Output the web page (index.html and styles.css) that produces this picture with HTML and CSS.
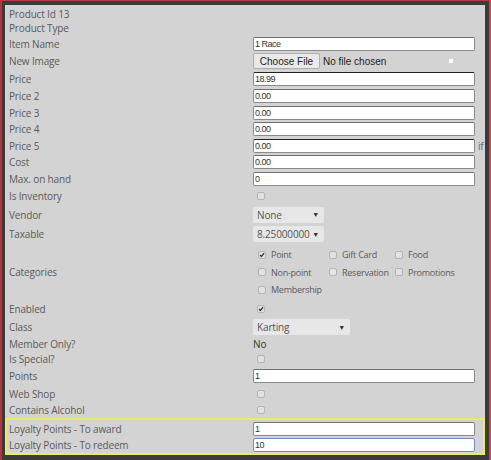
FILE: index.html
```html
<!DOCTYPE html>
<html>
<head>
<meta charset="utf-8">
<link rel="stylesheet" href="styles.css">
</head>
<body>
<div class="page">
  <div class="frame">
    <div class="form">
      <div class="row h14"><div class="lbl">Product Id 13</div></div>
      <div class="row h14"><div class="lbl">Product Type</div></div>
      <div class="row h17"><div class="lbl">Item Name</div><div class="val"><input class="txt" type="text" value="1 Race"></div></div>
      <div class="row h18"><div class="lbl">New Image</div>
        <div class="val file"><span class="btn">Choose File</span><span class="nofile">No file chosen</span><span class="dot"></span></div></div>
      <div class="row h17"><div class="lbl">Price</div><div class="val"><input class="txt hot" type="text" value="18.99"></div></div>
      <div class="row h17"><div class="lbl">Price 2</div><div class="val"><input class="txt" type="text" value="0.00"></div></div>
      <div class="row h17"><div class="lbl">Price 3</div><div class="val"><input class="txt" type="text" value="0.00"></div></div>
      <div class="row h16"><div class="lbl">Price 4</div><div class="val"><input class="txt" type="text" value="0.00"></div></div>
      <div class="row h17"><div class="lbl">Price 5</div><div class="val"><input class="txt hot" type="text" value="0.00"><span class="if">if</span></div></div>
      <div class="row h16"><div class="lbl">Cost</div><div class="val"><input class="txt" type="text" value="0.00"></div></div>
      <div class="row h17"><div class="lbl">Max. on hand</div><div class="val"><input class="txt" type="text" value="0"></div></div>
      <div class="row h18"><div class="lbl">Is Inventory</div><div class="val"><span class="cb"></span></div></div>
      <div class="row h19"><div class="lbl">Vendor</div><div class="val"><span class="sel w71">None<span class="arr">&#9660;</span></span></div></div>
      <div class="row h20"><div class="lbl">Taxable</div><div class="val"><span class="sel w71">8.25000000<span class="arr">&#9660;</span></span></div></div>
      <div class="row h56"><div class="lbl">Categories</div>
        <div class="cats">
          <div class="cat"><span class="cb on"><svg viewBox="0 0 8 8"><path d="M1.4 4 L3.2 5.9 L6.8 1.5" fill="none" stroke="#333" stroke-width="1.7"/></svg></span><span>Point</span></div>
          <div class="cat"><span class="cb"></span><span>Gift Card</span></div>
          <div class="cat"><span class="cb"></span><span>Food</span></div>
          <div class="cat"><span class="cb"></span><span>Non-point</span></div>
          <div class="cat"><span class="cb"></span><span>Reservation</span></div>
          <div class="cat"><span class="cb"></span><span>Promotions</span></div>
          <div class="cat"><span class="cb"></span><span>Membership</span></div>
        </div>
      </div>
      <div class="row h18"><div class="lbl">Enabled</div><div class="val"><span class="cb on"><svg viewBox="0 0 8 8"><path d="M1.4 4 L3.2 5.9 L6.8 1.5" fill="none" stroke="#333" stroke-width="1.7"/></svg></span></div></div>
      <div class="row h18"><div class="lbl">Class</div><div class="val"><span class="sel w97">Karting<span class="arr">&#9660;</span></span></div></div>
      <div class="row h15"><div class="lbl">Member Only?</div><div class="val"><span class="plain">No</span></div></div>
      <div class="row h16"><div class="lbl">Is Special?</div><div class="val"><span class="cb"></span></div></div>
      <div class="row h18"><div class="lbl">Points</div><div class="val"><input class="txt" type="text" value="1"></div></div>
      <div class="row h17"><div class="lbl">Web Shop</div><div class="val"><span class="cb"></span></div></div>
      <div class="row h16"><div class="lbl">Contains Alcohol</div><div class="val"><span class="cb"></span></div></div>
      <div class="loyal">
        <div class="row h17 in"><div class="lbl">Loyalty Points - To award</div><div class="val"><input class="txt" type="text" value="1"></div></div>
        <div class="row h16 in"><div class="lbl">Loyalty Points - To redeem</div><div class="val"><input class="txt focus" type="text" value="10"></div></div>
      </div>
    </div>
  </div>
</div>
</body>
</html>
```

FILE: styles.css
```css
html, body {
  margin: 0;
  padding: 0;
  background: #3b3b3b;
}
.page {
  width: 491px;
  height: 460px;
  box-sizing: border-box;
  border-left: 2px solid #b3363a;
  border-right: 2px solid #d04446;
  border-top: 1px solid #c03a3c;
}
.frame {
  height: 100%;
  box-sizing: border-box;
  border-style: solid;
  border-color: #3b3b3b;
  border-width: 4px 4px 5px 3px;
  background: #d3d3d3;
}
.form {
  padding-top: 2px;
  font-family: "Open Sans", "Noto Sans", sans-serif;
  font-size: 10px;
  letter-spacing: -0.15px;
  color: #5a5a5a;
}
.row {
  display: flex;
  align-items: center;
  padding-left: 4px;
}
.h14 { height: 14px; }
.h15 { height: 15px; }
.h16 { height: 16px; }
.h17 { height: 17px; }
.h18 { height: 18px; }
.h19 { height: 19px; }
.h20 { height: 20px; }
.h56 { height: 56px; }
.lbl {
  width: 244px;
  flex: none;
  white-space: nowrap;
}
.val {
  display: flex;
  align-items: center;
}
.txt {
  box-sizing: border-box;
  width: 222px;
  height: 14px;
  margin: 0;
  padding: 0 1px;
  border: 1px solid #8a8a8a;
  border-top-color: #707070;
  border-radius: 2px;
  background: #fff;
  font-family: "Liberation Sans", Arial, sans-serif;
  font-size: 9px;
  letter-spacing: -0.5px;
  color: #333;
  outline: none;
}
.txt.hot { border-top-color: #222; }
.txt.focus { border-color: #6a8fc8; }
.if {
  margin-left: 3px;
  color: #4e7189;
  font-size: 10px;
}
.file {
  width: 222px;
  font-family: "Liberation Sans", Arial, sans-serif;
  font-size: 10px;
  letter-spacing: 0;
  color: #222;
}
.btn {
  box-sizing: border-box;
  width: 67px;
  height: 16px;
  display: flex;
  align-items: center;
  justify-content: center;
  background: #e9e9e9;
  border: 1px solid #adadad;
  border-radius: 2px;
  color: #222;
}
.nofile { margin-left: 3px; }
.dot {
  width: 4px;
  height: 4px;
  background: #fff;
  margin-left: auto;
  margin-right: 22px;
}
.cb {
  box-sizing: border-box;
  width: 8px;
  height: 8px;
  margin-left: 4px;
  border: 1px solid #b4b4b4;
  border-radius: 2px;
  background: #e2e2e2;
  display: flex;
  flex: none;
}
.cb svg { width: 100%; height: 100%; display: block; overflow: visible; }
.sel {
  box-sizing: border-box;
  height: 16px;
  display: flex;
  align-items: center;
  padding-left: 4px;
  background: #e7e7e7;
  border-radius: 2px;
  color: #555;
}
.w71 { width: 71px; }
.w97 { width: 97px; }
.arr {
  margin-left: auto;
  margin-right: 5px;
  font-size: 7px;
  color: #333;
}
.plain { color: #333; }
.cats {
  display: grid;
  grid-template-columns: 71px 66px auto;
  grid-auto-rows: 17.5px;
  font-size: 9px;
  letter-spacing: -0.25px;
}
.cat {
  display: flex;
  align-items: center;
}
.cat .cb { margin-left: 5px; margin-right: 5px; }
.loyal {
  border: 2px solid #ecec62;
}
.row.in { padding-left: 2px; }
```
